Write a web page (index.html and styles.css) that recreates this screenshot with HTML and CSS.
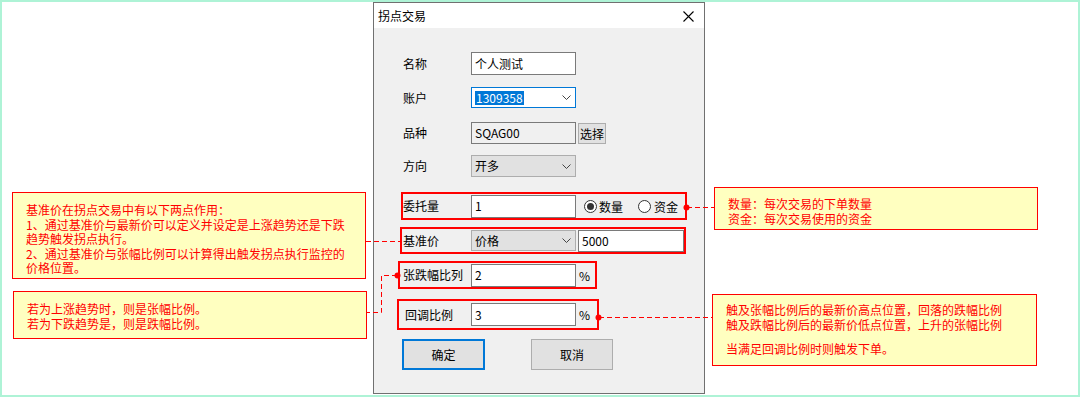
FILE: index.html
```html
<!DOCTYPE html>
<html lang="zh-CN">
<head>
    <meta charset="UTF-8">
    <title>拐点交易</title>
    <link rel="stylesheet" href="styles.css">
</head>
<body>
    <div class="canvas">
        <div class="dialog">
            <div class="titlebar">
                <span class="title">拐点交易</span>
                <svg class="close" width="11" height="11" viewBox="0 0 11 11">
                    <path d="M0.5 0.5 L10.5 10.5 M10.5 0.5 L0.5 10.5" stroke="#000" stroke-width="1.1" fill="none"/>
                </svg>
            </div>
            <div class="body">
                <div class="row r-name">
                    <span class="label">名称</span>
                    <div class="field">个人测试</div>
                </div>
                <div class="row r-account">
                    <span class="label">账户</span>
                    <div class="field combo focused">
                        <span class="selected">1309358</span>
                        <svg class="chevron" width="9" height="5" viewBox="0 0 9 5"><path d="M0.5 0.5 L4.5 4.5 L8.5 0.5" stroke="#444" fill="none"/></svg>
                    </div>
                </div>
                <div class="row r-symbol">
                    <span class="label">品种</span>
                    <div class="field readonly">SQAG00</div>
                    <button class="small-btn">选择</button>
                </div>
                <div class="row r-dir">
                    <span class="label">方向</span>
                    <div class="field combo gray">
                        <span>开多</span>
                        <svg class="chevron" width="9" height="5" viewBox="0 0 9 5"><path d="M0.5 0.5 L4.5 4.5 L8.5 0.5" stroke="#444" fill="none"/></svg>
                    </div>
                </div>
                <div class="row boxed r-qty">
                    <span class="label">委托量</span>
                    <div class="field">1</div>
                    <span class="radio checked"></span><span class="radio-text">数量</span>
                    <span class="radio second"></span><span class="radio-text fund">资金</span>
                </div>
                <div class="row boxed r-base">
                    <span class="label">基准价</span>
                    <div class="field combo gray">
                        <span>价格</span>
                        <svg class="chevron" width="9" height="5" viewBox="0 0 9 5"><path d="M0.5 0.5 L4.5 4.5 L8.5 0.5" stroke="#444" fill="none"/></svg>
                    </div>
                    <div class="field price">5000</div>
                </div>
                <div class="row boxed r-range">
                    <span class="label">张跌幅比列</span>
                    <div class="field">2</div>
                    <span class="pct">%</span>
                </div>
                <div class="row boxed r-back">
                    <span class="label">回调比例</span>
                    <div class="field">3</div>
                    <span class="pct">%</span>
                </div>
                <div class="buttons">
                    <button class="btn default">确定</button>
                    <button class="btn">取消</button>
                </div>
            </div>
        </div>

        <div class="note note-base">
            <p>基准价在拐点交易中有以下两点作用：</p>
            <p>1、通过基准价与最新价可以定义并设定是上涨趋势还是下跌</p>
            <p>趋势触发拐点执行。</p>
            <p>2、通过基准价与张幅比例可以计算得出触发拐点执行监控的</p>
            <p>价格位置。</p>
        </div>
        <div class="note note-range">
            <p>若为上涨趋势时，则是张幅比例。</p>
            <p>若为下跌趋势是，则是跌幅比例。</p>
        </div>
        <div class="note note-qty">
            <p>数量：每次交易的下单数量</p>
            <p>资金：每次交易使用的资金</p>
        </div>
        <div class="note note-back">
            <p>触及张幅比例后的最新价高点位置，回落的跌幅比例</p>
            <p>触及跌幅比例后的最新价低点位置，上升的张幅比例</p>
            <p class="gap">当满足回调比例时则触发下单。</p>
        </div>

        <svg class="links" width="1080" height="397" viewBox="0 0 1080 397">
            <g stroke="#f00" stroke-width="1" stroke-dasharray="5 3" fill="none">
                <path d="M687 207.5 H714"/>
                <path d="M366 241.5 H400"/>
                <path d="M397 275.5 H381.5 V312.5 H366"/>
                <path d="M599 317.5 H712"/>
            </g>
            <g fill="#f00">
                <circle cx="686.5" cy="207.5" r="3"/>
                <circle cx="397.5" cy="275.5" r="3"/>
                <circle cx="598.5" cy="317.5" r="3"/>
            </g>
        </svg>
    </div>
</body>
</html>
```

FILE: styles.css
```css
body {
    margin: 0;
    font-family: "Noto Sans CJK SC", "Noto Sans", sans-serif;
    font-size: 12px;
    color: #000;
    background: #fff;
}
.canvas {
    position: relative;
    width: 1080px;
    height: 397px;
    box-sizing: border-box;
    border: 2px solid #aef3d6;
    background: #fff;
}
p {
    margin: 0;
}

/* dialog */
.dialog {
    margin-left: 371px;
    width: 332px;
    height: 392px;
    box-sizing: border-box;
    border: 1px solid #707070;
    background: #f0f0f0;
    display: flex;
    flex-direction: column;
}
.titlebar {
    height: 25px;
    background: #fff;
    display: flex;
    align-items: center;
    justify-content: space-between;
    padding: 0 10px 0 4px;
}
.close {
    margin-top: 1px;
}
.body {
    display: flex;
    flex-direction: column;
}
.row {
    display: flex;
    align-items: center;
    box-sizing: border-box;
}
.label {
    flex: none;
    width: 68px;
    line-height: 14px;
}
.field {
    flex: none;
    width: 105px;
    height: 100%;
    box-sizing: border-box;
    border: 1px solid #7a7a7a;
    background: #fff;
    padding: 0 3px;
    display: flex;
    align-items: center;
    line-height: 14px;
}
.combo {
    justify-content: space-between;
    padding-right: 4px;
}
.combo.focused {
    border-color: #0078d7;
}
.combo.gray {
    background: #e1e1e1;
    border-color: #adadad;
}
.selected {
    background: #0078d7;
    color: #fff;
    padding: 0 1px;
}
.readonly {
    background: #f0f0f0;
}
.small-btn {
    margin: 1px 0 0 2px;
    height: 21px;
    width: 28px;
    padding: 0;
    border: 1px solid #adadad;
    background: #e1e1e1;
    font: inherit;
    color: #000;
}

.r-name { margin: 24px 0 0 29px; height: 23px; }
.r-account { margin: 12px 0 0 29px; height: 21px; }
.r-symbol { margin: 14px 0 0 29px; height: 22px; }
.r-symbol .field { height: 22px; }
.r-dir { margin: 11px 0 0 29px; height: 22px; }

.boxed {
    border: 2px solid #f00;
}
.boxed .field {
    height: auto;
}
.r-qty { margin: 15px 0 0 27px; width: 286px; height: 28px; }
.r-qty .field { height: 23px; }
.r-base { margin: 7px 0 0 26px; width: 286px; height: 27px; }
.r-base .label { width: 68px; padding-left: 1px; }
.r-base .field { height: 21px; }
.r-base .price { width: 106px; height: 22px; margin-left: 2px; }
.r-range { margin: 7px 0 0 24px; width: 199px; height: 28px; }
.r-range .label { width: 68px; padding-left: 3px; }
.r-range .field { height: 23px; }
.r-back { margin: 10px 0 0 23px; width: 202px; height: 31px; }
.r-back .label { width: 66px; padding-left: 6px; }
.r-back .field { height: 23px; }
.pct {
    margin-left: 3px;
}

.radio {
    flex: none;
    width: 13px;
    height: 13px;
    box-sizing: border-box;
    border: 1px solid #333;
    border-radius: 50%;
    background: #fff;
    margin-left: 8px;
    display: flex;
    align-items: center;
    justify-content: center;
}
.radio.checked::after {
    content: "";
    width: 7px;
    height: 7px;
    border-radius: 50%;
    background: #333;
}
.radio.second {
    margin-left: 15px;
}
.radio-text {
    margin-left: 2px;
}
.radio-text.fund {
    margin-left: 3px;
}

.buttons {
    display: flex;
    margin: 9px 0 0 28px;
    gap: 46px;
}
.btn {
    width: 82px;
    height: 31px;
    padding: 0;
    box-sizing: border-box;
    border: 1px solid #adadad;
    background: #e1e1e1;
    font: inherit;
    color: #000;
}
.btn.default {
    width: 83px;
    border: 2px solid #0078d7;
}

/* callouts */
.note {
    position: absolute;
    box-sizing: border-box;
    border: 1px solid #f00;
    background: #ffffc0;
    color: #f00;
    padding-left: 13px;
    line-height: 14.5px;
}
.note-base { left: 10px; top: 190px; width: 354px; height: 87px; padding-top: 10px; }
.note-range { left: 11px; top: 289px; width: 354px; height: 48px; padding-top: 10px; }
.note-qty { left: 712px; top: 185px; width: 324px; height: 43px; padding-top: 9px; }
.note-back { left: 710px; top: 292px; width: 325px; height: 72px; padding-top: 8px; }
.note .gap {
    margin-top: 10px;
}
.links {
    position: absolute;
    left: -2px;
    top: -2px;
    pointer-events: none;
}
```
